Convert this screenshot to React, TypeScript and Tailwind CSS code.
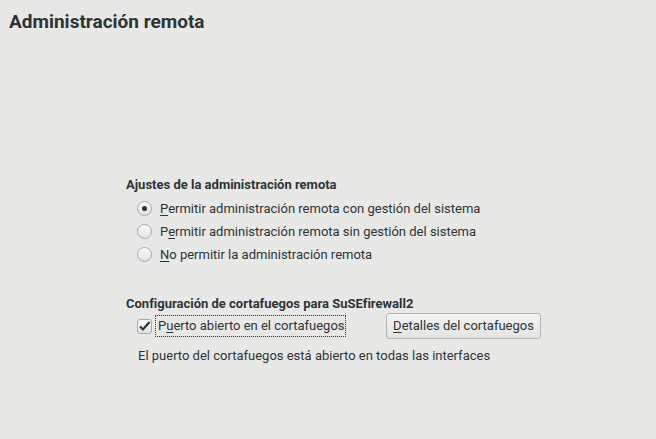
import React from "react";

function Radio({ checked }: { checked?: boolean }) {
  return (
    <span className="w-[15px] h-[15px] rounded-full border border-[#a8a8a6] bg-gradient-to-b from-[#fbfbfb] to-[#e2e2e1] flex items-center justify-center shrink-0">
      {checked && <span className="w-[5px] h-[5px] rounded-full bg-[#2e3436]" />}
    </span>
  );
}

export default function App() {
  const font = { fontFamily: "Roboto, 'Noto Sans', sans-serif" };
  return (
    <div className="w-[656px] h-[439px] bg-[#e8e8e7] text-[#2e3436] overflow-hidden [font-variant-ligatures:none]" style={font}>
      <div className="pl-[9px] pt-[10px] text-[19px] font-bold leading-[24px] text-[#2e3436]">Administración remota</div>
      <div className="pl-[126px] pt-[142px]">
        <div className="text-[13px] font-bold leading-[18px]">Ajustes de la administración remota</div>
        <div className="pl-[11px] mt-[3px] flex flex-col text-[13px] leading-[18px]">
          <div className="h-[23px] flex items-center gap-[8px]">
            <Radio checked />
            <span><u className="underline-offset-2">P</u>ermitir administración remota con gestión del sistema</span>
          </div>
          <div className="h-[23px] flex items-center gap-[8px]">
            <Radio />
            <span>P<u className="underline-offset-2">e</u>rmitir administración remota sin gestión del sistema</span>
          </div>
          <div className="h-[23px] flex items-center gap-[8px]">
            <Radio />
            <span><u className="underline-offset-2">N</u>o permitir la administración remota</span>
          </div>
        </div>
        <div className="mt-[29px] text-[13px] font-bold leading-[18px]">Configuración de cortafuegos para SuSEfirewall2</div>
        <div className="pl-[11px] mt-0 flex items-center text-[13px] leading-[18px]">
          <span className="w-[15px] h-[15px] rounded-[3px] border border-[#a8a8a6] bg-gradient-to-b from-[#fbfbfb] to-[#e2e2e1] flex items-center justify-center shrink-0">
            <svg width="13" height="13" viewBox="0 0 13 13">
              <path d="M2 6.5 L5 9.5 L11.5 2" fill="none" stroke="#2e3436" strokeWidth="2.2" />
            </svg>
          </span>
          <span className="ml-[3px] border border-dotted border-[#2e3436] px-[2px] py-[1px] w-[191px] whitespace-nowrap">
            P<u className="underline-offset-2">u</u>erto abierto en el cortafuegos
          </span>
          <button className="ml-[40px] w-[155px] h-[26px] rounded-[3px] border border-[#b3b3b1] bg-gradient-to-b from-[#f4f4f3] to-[#e4e4e2] text-[13px] text-[#2e3436] flex items-center justify-center">
            <span><u className="underline-offset-2">D</u>etalles del cortafuegos</span>
          </button>
        </div>
        <div className="pl-[12px] mt-[8px] text-[13px] leading-[18px]">El puerto del cortafuegos está abierto en todas las interfaces</div>
      </div>
    </div>
  );
}
